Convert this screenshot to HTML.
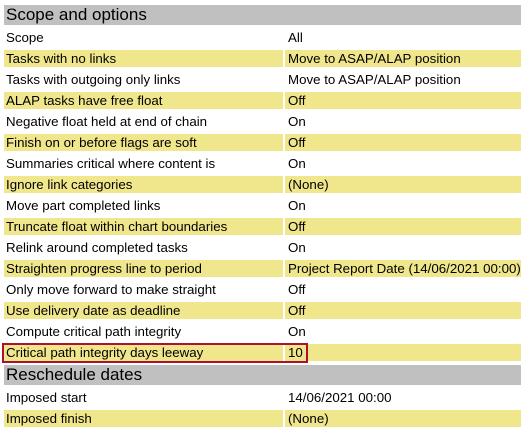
<!DOCTYPE html>
<html><head><style>
body{margin:0;width:525px;height:430px;background:#fff;font-family:"Liberation Sans",Arial,sans-serif;color:#000;position:relative;overflow:hidden}
.h{position:absolute;left:4px;width:517px;height:20px;background:#c0c0c0;font-size:17px;line-height:20px;padding-left:2px;box-sizing:border-box}
.r{position:absolute;left:0;width:525px;height:21px;font-size:13.3px}
.r div{position:absolute;top:2px;height:17px;line-height:17px;padding-left:2px;box-sizing:border-box;white-space:nowrap}
.l{left:4px;width:279px}
.v{left:285px;width:236px;padding-left:3px!important}
.y div{background:#f0e68c}
.box{position:absolute;left:2px;top:343px;width:306px;height:20px;border:2px solid #b01030;box-sizing:border-box}
</style></head><body>
<div class="h" style="top:5px">Scope and options</div>
<div class="r" style="top:27px"><div class="l">Scope</div><div class="v">All</div></div>
<div class="r y" style="top:48px"><div class="l">Tasks with no links</div><div class="v">Move to ASAP/ALAP position</div></div>
<div class="r" style="top:69px"><div class="l">Tasks with outgoing only links</div><div class="v">Move to ASAP/ALAP position</div></div>
<div class="r y" style="top:90px"><div class="l">ALAP tasks have free float</div><div class="v">Off</div></div>
<div class="r" style="top:111px"><div class="l">Negative float held at end of chain</div><div class="v">On</div></div>
<div class="r y" style="top:132px"><div class="l">Finish on or before flags are soft</div><div class="v">Off</div></div>
<div class="r" style="top:153px"><div class="l">Summaries critical where content is</div><div class="v">On</div></div>
<div class="r y" style="top:174px"><div class="l">Ignore link categories</div><div class="v">(None)</div></div>
<div class="r" style="top:195px"><div class="l">Move part completed links</div><div class="v">On</div></div>
<div class="r y" style="top:216px"><div class="l">Truncate float within chart boundaries</div><div class="v">Off</div></div>
<div class="r" style="top:237px"><div class="l">Relink around completed tasks</div><div class="v">On</div></div>
<div class="r y" style="top:258px"><div class="l">Straighten progress line to period</div><div class="v">Project Report Date (14/06/2021 00:00)</div></div>
<div class="r" style="top:279px"><div class="l">Only move forward to make straight</div><div class="v">Off</div></div>
<div class="r y" style="top:300px"><div class="l">Use delivery date as deadline</div><div class="v">Off</div></div>
<div class="r" style="top:321px"><div class="l">Compute critical path integrity</div><div class="v">On</div></div>
<div class="r y" style="top:342px"><div class="l">Critical path integrity days leeway</div><div class="v">10</div></div>
<div class="box"></div>
<div class="h" style="top:365px">Reschedule dates</div>
<div class="r" style="top:387px"><div class="l">Imposed start</div><div class="v">14/06/2021 00:00</div></div>
<div class="r y" style="top:408px"><div class="l">Imposed finish</div><div class="v">(None)</div></div>
</body></html>
